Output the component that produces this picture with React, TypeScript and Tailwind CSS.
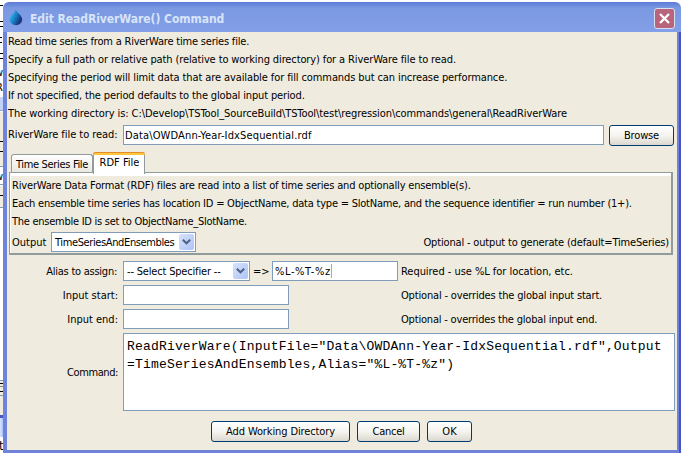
import React from "react";

const FIELD = "border border-[#7f9db9] bg-white flex items-center";
const BTN =
  "flex h-[21px] items-center justify-center rounded-[3px] border border-[#003c74] bg-linear-to-b from-white via-[#f5f4f0] to-[#dcd8cf]";

function T({ className = "", children }: { className?: string; children: React.ReactNode }) {
  return <span className={`-mb-px block pt-px ${className}`}>{children}</span>;
}

function Combo({ className, children }: { className: string; children: React.ReactNode }) {
  return (
    <div className={`${FIELD} h-[20px] shrink-0 justify-between pl-[3px] pr-px ${className}`}>
      {children}
      <span className="flex h-[16px] w-[15px] shrink-0 items-center justify-center rounded-[2px] bg-linear-to-br from-[#d6e2fd] to-[#aec4f6]">
        <svg width="9" height="6" viewBox="0 0 9 6">
          <path d="M0.8 0.8 4.5 4.3 8.2 0.8" fill="none" stroke="#4d6185" strokeWidth="2" />
        </svg>
      </span>
    </div>
  );
}

function Backdrop() {
  return (
    <div className="relative h-[453px] w-[3px] shrink-0 overflow-hidden bg-white text-[11px]">
      <i className="absolute left-0 top-[5px] h-px w-[3px] bg-black" />
      <i className="absolute left-0 top-[21px] h-px w-[3px] bg-black" />
      <i className="absolute left-0 top-[26px] h-px w-[3px] bg-black" />
      <i className="absolute left-0 top-[37px] h-px w-[2px] bg-black" />
      <i className="absolute left-0 top-[42px] h-px w-[2px] bg-black" />
      <i className="absolute left-0 top-[53px] h-px w-[3px] bg-black" />
      <i className="absolute left-0 top-[58px] h-px w-[3px] bg-black" />
      <span className="absolute -left-[5px] top-[66px] leading-[14px]">w</span>
      <span className="absolute -left-[4px] top-[81px] leading-[14px]">R</span>
      <i className="absolute left-0 top-[97px] h-[14px] w-[3px] border-b border-[#8fa7d0] bg-[#c0d2f5]" />
      <i className="absolute left-0 top-[112px] h-[54px] w-[3px] bg-[#efebde]" />
      <i className="absolute left-0 top-[141px] h-px w-[3px] bg-black" />
      <i className="absolute left-0 top-[151px] h-px w-[3px] bg-black" />
      <i className="absolute left-0 top-[166px] h-[19px] w-[3px] border-y border-[#7f9db9] bg-white" />
      <span className="absolute -left-[5px] top-[170px] leading-[14px]">w</span>
      <i className="absolute left-0 top-[186px] h-[22px] w-[3px] border-b border-[#7f9db9] bg-[#efebde]" />
      <i className="absolute left-0 top-[195px] h-px w-[3px] bg-black" />
      <i className="absolute left-0 top-[380px] h-[35px] w-[3px] border-t border-[#7f9db9] bg-[#efebde]" />
      <i className="absolute left-0 top-[383px] h-px w-[3px] bg-black" />
      <i className="absolute left-0 top-[386px] h-px w-[3px] bg-[#888]" />
      <i className="absolute left-0 top-[391px] h-px w-[3px] bg-black" />
      <i className="absolute left-0 top-[395px] h-px w-[3px] bg-[#7f9db9]" />
      <i className="absolute left-0 top-[415px] h-[3px] w-[3px] bg-[#4a55c5]" />
      <i className="absolute left-0 top-[418px] h-[19px] w-[3px] bg-linear-to-r from-[#d6e6ff] to-[#a9c4fa]" />
      <span className="absolute -left-px top-[439px] text-[13px] leading-[14px]">t</span>
    </div>
  );
}

function TitleBar() {
  return (
    <div className="flex h-[30px] items-center rounded-t-[6px] bg-linear-to-b from-[#5d7bd6] via-[#7b98e2] via-20% to-[#829fe8] pl-[6px] pr-[6px]">
      <svg width="14" height="17" viewBox="0 0 14 17" className="mt-px">
        <defs>
          <linearGradient id="drop" x1="0" y1="0" x2="1" y2="0.6">
            <stop offset="0.1" stopColor="#45bfe8" />
            <stop offset="0.5" stopColor="#1787cc" />
            <stop offset="0.9" stopColor="#173a80" />
          </linearGradient>
        </defs>
        <path d="M6.5 0.5C8 3.5 13.2 6.3 13.2 10.6c0 3.2-2.8 5.7-6.2 5.7S0.8 13.8 0.8 10.6C0.8 6.3 6 4.5 6.5 0.5Z" fill="url(#drop)" />
      </svg>
      <span className="ml-[7px] mt-[3px] whitespace-nowrap font-['DejaVu_Sans_Condensed','DejaVu_Sans',sans-serif] text-[12px] font-bold leading-[18px] tracking-[-0.05px] text-[#d8e4f8]">
        Edit ReadRiverWare() Command
      </span>
      <span className="ml-auto mt-[3px] flex h-[21px] w-[21px] items-center justify-center rounded-[3px] border border-[#d9dff3] bg-[#b8647c]">
        <svg width="11" height="11" viewBox="0 0 11 11">
          <path d="M1 1 10 10M10 1 1 10" stroke="#fff" strokeWidth="2.3" />
        </svg>
      </span>
    </div>
  );
}

export default function App() {
  return (
    <div className="flex h-[453px] w-[681px] overflow-hidden whitespace-nowrap bg-white font-['DejaVu_Sans_Condensed','DejaVu_Sans',sans-serif] text-[11px] leading-[18px] text-black">
      <Backdrop />
      <div className="flex w-[678px] flex-col pt-[2px]">
        <TitleBar />
        <div className="border-r-2 border-[#4a52c4]">
          <div className="flex h-[421px] flex-col border-b-[3px] border-l-4 border-r-2 border-[#7083da] bg-[#efebde]">
            <div className="flex flex-col items-start pl-px">
              <T className="tracking-[-0.2px]">Read time series from a RiverWare time series file.</T>
              <T className="tracking-[-0.115px]">Specify a full path or relative path (relative to working directory) for a RiverWare file to read.</T>
              <T className="tracking-[-0.1px]">Specifying the period will limit data that are available for fill commands but can increase performance.</T>
              <T className="tracking-[-0.14px]">If not specified, the period defaults to the global input period.</T>
              <T className="tracking-[-0.083px]">The working directory is: C:\Develop\TSTool_SourceBuild\TSTool\test\regression\commands\general\ReadRiverWare</T>
            </div>

            <div className="mt-[3px] flex h-[21px] pl-px">
              <T className="w-[115px] tracking-[-0.05px]">RiverWare file to read:</T>
              <div className={`${FIELD} h-[20px] w-[481px] pl-px`}>
                <T className="tracking-[0.14px]">Data\OWDAnn-Year-IdxSequential.rdf</T>
              </div>
              <div className={`${BTN} ml-[5px] w-[65px]`}>
                <span className="tracking-[-0.15px]">Browse</span>
              </div>
            </div>

            <div className="mt-[6px] flex h-[20px] items-end pl-[4px]">
              <div className="flex h-[18px] w-[82px] items-center justify-center rounded-t-[3px] border border-b-0 border-[#919b9c] bg-linear-to-b from-white to-[#eae8df]">
                <T className="tracking-[-0.33px]">Time Series File</T>
              </div>
              <div className="relative -mb-[2px] h-[22px] w-[52px] rounded-t-[3px] border border-y-0 border-[#919b9c] bg-white">
                <div className="-mx-px h-[3px] rounded-t-[3px] border-t border-[#e68b2c] bg-[#ffc73c]" />
                <div className="-mt-[2px] flex justify-center pl-px">
                  <T>RDF File</T>
                </div>
              </div>
            </div>
            <div className="ml-[2px] h-[83px] w-[664px] border border-b-2 border-r-2 border-[#919b9c]">
              <div className="flex h-full flex-col border-l border-t-[3px] border-white bg-[#efebde] pl-px">
                <T className="tracking-[-0.17px]">RiverWare Data Format (RDF) files are read into a list of time series and optionally ensemble(s).</T>
                <T className="tracking-[-0.22px]">Each ensemble time series has location ID = ObjectName, data type = SlotName, and the sequence identifier = run number (1+).</T>
                <T className="tracking-[-0.26px]">The ensemble ID is set to ObjectName_SlotName.</T>
                <div className="mt-[2px] flex h-[20px] items-center">
                  <T className="w-[39px]">Output</T>
                  <Combo className="w-[145px]">
                    <T className="tracking-[-0.38px]">TimeSeriesAndEnsembles</T>
                  </Combo>
                  <T className="ml-auto pr-[2px] tracking-[-0.17px]">Optional - output to generate (default=TimeSeries)</T>
                </div>
              </div>
            </div>

            <div className="mt-[6px] grid grid-cols-[111px_273px_1fr] gap-x-[5px] gap-y-[4px]">
              <T className="pr-px text-right leading-[20px] tracking-[-0.25px]">Alias to assign:</T>
              <div className="flex items-center">
                <Combo className="w-[127px]">
                  <T className="tracking-[-0.18px]">-- Select Specifier --</T>
                </Combo>
                <T className="w-[22px] shrink-0 pl-[3px]">=&gt;</T>
                <div className={`${FIELD} h-[20px] w-[126px] shrink-0 pl-[2px]`}>
                  <T className="tracking-[0.6px]">%L-%T-%z</T>
                  <i className="h-[14px] w-px bg-[#aaa]" />
                </div>
              </div>
              <T className="leading-[20px] tracking-[-0.04px]">Required - use %L for location, etc.</T>

              <T className="text-right leading-[20px]">Input start:</T>
              <div className={`${FIELD} h-[20px] w-[166px]`} />
              <T className="leading-[20px] tracking-[-0.17px]">Optional - overrides the global input start.</T>

              <T className="text-right leading-[20px]">Input end:</T>
              <div className={`${FIELD} h-[20px] w-[166px]`} />
              <T className="leading-[20px] tracking-[-0.19px]">Optional - overrides the global input end.</T>
            </div>

            <div className="mt-[4px] flex h-[78px] items-center">
              <T className="w-[111px] text-right tracking-[-0.4px]">Command:</T>
              <div className="ml-[5px] h-[78px] w-[552px] border border-[#7f9db9] bg-white pl-[3px] pt-[4px] font-['Liberation_Mono',monospace] text-[13px] tracking-[0.18px]">
                <div>ReadRiverWare(InputFile="Data\OWDAnn-Year-IdxSequential.rdf",Output</div>
                <div>=TimeSeriesAndEnsembles,Alias="%L-%T-%z")</div>
              </div>
            </div>

            <div className="mt-[10px] flex gap-[7px] pl-[204px]">
              <div className={`${BTN} w-[139px]`}><span className="tracking-[-0.12px]">Add Working Directory</span></div>
              <div className={`${BTN} w-[63px]`}><span className="tracking-[-0.25px]">Cancel</span></div>
              <div className={`${BTN} w-[45px]`}><span>OK</span></div>
            </div>
          </div>
        </div>
      </div>
    </div>
  );
}
